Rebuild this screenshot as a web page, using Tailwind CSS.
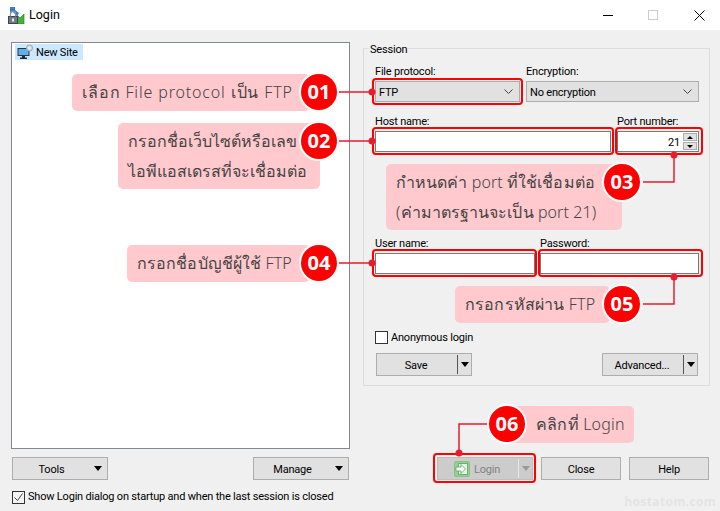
<!DOCTYPE html>
<html lang="th">
<head>
  <meta charset="UTF-8" />
  <meta name="viewport" content="width=device-width, initial-scale=1.0" />
  <title>Login</title>
  <script src="https://cdn.jsdelivr.net/npm/@tailwindcss/browser@4"></script>
</head>
<body class="bg-[#f0f0f0]">
  <div class="relative w-[720px] h-[511px] overflow-hidden bg-[#f0f0f0] font-['Roboto','Liberation_Sans',sans-serif] text-[11px] tracking-[-0.2px] leading-[16px] text-black">

    <!-- title bar -->
    <div class="flex items-center h-[30px] bg-white">
      <svg class="shrink-0 ml-[8px] w-[17px] h-[17px]" viewBox="0 0 17 17">
        <path d="M9 8l3 3 4-4v10H9z" fill="#45b23c" stroke="#1f7a20" stroke-width=".6"/>
        <path d="M2 0h5v3l4 3-2 3-4-4H2z" fill="#2d7fd6"/>
        <rect x=".5" y="9.500" width="9" height="7" fill="#6f7a86" stroke="#3f454d"/>
        <path d="M2.500 9.500V7a2.500 2.500 0 0 1 5 0v2.500" fill="none" stroke="#8a929c" stroke-width="1.300"/>
        <rect x="4" y="11.500" width="2" height="3" fill="#e8e8e8"/>
      </svg>
      <span class="ml-[4px] text-[12.5px] tracking-normal">Login</span>
      <div class="ml-auto flex items-center">
        <div class="w-[10px] h-px bg-black mr-[35px]"></div>
        <div class="w-[10px] h-[10px] border border-[#cccccc] mr-[36px]"></div>
        <svg class="w-[11px] h-[11px] mr-[15px]" viewBox="0 0 11 11"><path d="M.5.5l10 10M10.500.5l-10 10" stroke="#000" fill="none"/></svg>
      </div>
    </div>

    <div class="flex pt-[12px] pl-[11px]">
      <!-- left column -->
      <div class="w-[339px]">
        <div class="h-[407px] bg-white border border-[#828790] pl-[3px] pt-[1px]">
          <div class="flex items-center w-[68px] h-[16px] bg-[#cce8ff] whitespace-nowrap">
            <svg class="shrink-0 ml-[2px] w-[17px] h-[16px]" viewBox="0 0 17 16">
              <rect x="1" y="4.500" width="11" height="7" fill="#5eb0ea" stroke="#2a3644"/>
              <path d="M5 12h3v1.500h2V15H3v-1.500h2z" fill="#1f2a36"/>
              <circle cx="12.500" cy="4" r="3" fill="#d5dce2" stroke="#9aa6b0"/>
              <circle cx="12.500" cy="4" r="1" fill="#f4f7f9"/>
            </svg>
            <span class="ml-[2px] pt-[2px]">New Site</span>
          </div>
        </div>
        <div class="flex justify-between mt-[8px] pl-[1px] pr-[1px]">
          <div class="relative flex items-center justify-center w-[96px] h-[23px] bg-[#e1e1e1] border border-[#adadad]">
            <span class="mr-[17px] pt-[2px]">Tools</span>
            <span class="absolute right-[5px] top-[8px] w-0 h-0 border-x-[4px] border-x-transparent border-t-[5px] border-t-black"></span>
          </div>
          <div class="relative flex items-center justify-center w-[96px] h-[23px] bg-[#e1e1e1] border border-[#adadad]">
            <span class="mr-[17px] pt-[2px]">Manage</span>
            <span class="absolute right-[5px] top-[8px] w-0 h-0 border-x-[4px] border-x-transparent border-t-[5px] border-t-black"></span>
          </div>
        </div>
        <div class="flex items-center mt-[9px] pl-[1px]">
          <svg class="shrink-0 w-[13px] h-[13px]" viewBox="0 0 13 13"><rect x=".5" y=".5" width="12" height="12" fill="#f4f4f4" stroke="#333"/><path d="M2.500 6.500l3 3L10.500 2.500" fill="none" stroke="#444"/></svg>
          <span class="ml-[3px] whitespace-nowrap">Show Login dialog on startup and when the last session is closed</span>
        </div>
      </div>

      <!-- right column -->
      <div class="ml-[13px] w-[347px] pt-[6px]">
        <div class="relative h-[338px] border border-[#dcdcdc] pl-[11px] pr-[10px] pt-[14px]">
          <span class="absolute left-[5px] -top-[7px] px-px bg-[#f0f0f0]">Session</span>

          <div class="flex gap-[6px]">
            <div class="w-[145px]">
              <div class="h-[16px] mb-[2px] pt-px">File protocol:</div>
              <div class="flex items-center justify-between h-[21px] bg-[#e1e1e1] border border-[#adadad] pl-[3px] pr-[6px]">
                <span class="pt-[2px]">FTP</span>
                <svg class="w-[9px] h-[5px]" viewBox="0 0 9 5"><path d="M.5.5l4 4 4-4" fill="none" stroke="#444"/></svg>
              </div>
            </div>
            <div class="w-[173px]">
              <div class="h-[16px] mb-[2px] pt-px">Encryption:</div>
              <div class="flex items-center justify-between h-[21px] bg-[#e1e1e1] border border-[#adadad] pl-[3px] pr-[6px]">
                <span class="pt-[2px]">No encryption</span>
                <svg class="w-[9px] h-[5px]" viewBox="0 0 9 5"><path d="M.5.5l4 4 4-4" fill="none" stroke="#444"/></svg>
              </div>
            </div>
          </div>

          <div class="flex gap-[6px] mt-[11px]">
            <div class="w-[236px]">
              <div class="h-[16px] mb-[2px] pt-px">Host name:</div>
              <div class="h-[21px] bg-white border border-[#7a7a7a]"></div>
            </div>
            <div class="w-[82px]">
              <div class="h-[16px] mb-[2px] pt-px">Port number:</div>
              <div class="flex items-center justify-end h-[21px] bg-white border border-[#7a7a7a] pr-px">
                <span class="mr-[3px] pt-[2px]">21</span>
                <div class="flex flex-col gap-px w-[14px]">
                  <div class="flex items-center justify-center h-[8px] bg-[#e1e1e1] border border-[#adadad]"><span class="w-0 h-0 border-x-[3px] border-x-transparent border-b-[3px] border-b-black"></span></div>
                  <div class="flex items-center justify-center h-[8px] bg-[#e1e1e1] border border-[#adadad]"><span class="w-0 h-0 border-x-[3px] border-x-transparent border-t-[3px] border-t-black"></span></div>
                </div>
              </div>
            </div>
          </div>

          <div class="flex gap-[5px] mt-[83px]">
            <div class="w-[160px]">
              <div class="h-[16px] mb-[2px] pt-px">User name:</div>
              <div class="h-[21px] bg-white border border-[#7a7a7a]"></div>
            </div>
            <div class="w-[159px]">
              <div class="h-[16px] mb-[2px] pt-px">Password:</div>
              <div class="h-[21px] bg-white border border-[#7a7a7a]"></div>
            </div>
          </div>

          <div class="flex items-center mt-[57px] h-[13px]">
            <div class="w-[13px] h-[13px] bg-white border border-[#333333]"></div>
            <span class="ml-[3px]">Anonymous login</span>
          </div>

          <div class="flex justify-between mt-[9px] pl-px pr-px">
            <div class="relative flex items-center justify-center w-[96px] h-[23px] bg-[#e1e1e1] border border-[#adadad]">
              <span class="mr-[16px] pt-[2px]">Save</span>
              <span class="absolute right-[13px] top-[1px] w-px h-[19px] bg-[#555555]"></span>
              <span class="absolute right-[2px] top-[8px] w-0 h-0 border-x-[4px] border-x-transparent border-t-[5px] border-t-black"></span>
            </div>
            <div class="relative flex items-center justify-center w-[96px] h-[23px] bg-[#e1e1e1] border border-[#adadad]">
              <span class="mr-[16px] pt-[2px]">Advanced...</span>
              <span class="absolute right-[13px] top-[1px] w-px h-[19px] bg-[#555555]"></span>
              <span class="absolute right-[2px] top-[8px] w-0 h-0 border-x-[4px] border-x-transparent border-t-[5px] border-t-black"></span>
            </div>
          </div>
        </div>

        <div class="flex gap-[8px] mt-[71px] pl-[74px]">
          <div class="relative flex items-center w-[96px] h-[23px] bg-[#cccccc] border border-[#bfbfbf] text-[#838383]">
            <svg class="shrink-0 ml-[16px] w-[16px] h-[16px]" viewBox="0 0 16 16">
              <rect x=".5" y=".5" width="15" height="15" rx="1.500" fill="#93d093" stroke="#86c186"/>
              <rect x="4.500" y="2.500" width="9" height="11" fill="#e9f5e9" stroke="#6fae6f"/>
              <path d="M2 6h5V3.500L11.500 8 7 12.500V10H2z" fill="#f7fbf7" stroke="#5fa35f" stroke-width=".8"/>
            </svg>
            <span class="ml-[4px] pt-[2px]">Login</span>
            <span class="absolute right-[13px] top-[1px] w-px h-[19px] bg-[#e8e8e8]"></span>
            <span class="absolute right-[2px] top-[8px] w-0 h-0 border-x-[4px] border-x-transparent border-t-[5px] border-t-[#999999]"></span>
          </div>
          <div class="flex items-center justify-center w-[80px] h-[23px] bg-[#e1e1e1] border border-[#adadad]"><span class="pt-[2px]">Close</span></div>
          <div class="flex items-center justify-center w-[80px] h-[23px] bg-[#e1e1e1] border border-[#adadad]"><span class="pt-[2px]">Help</span></div>
        </div>
      </div>
    </div>

    <!-- annotations over the dialog -->
    <div class="absolute left-[372px] top-[78px] w-[151px] h-[27px] border-2 border-[#ff0000] rounded-[4px]"></div>
    <div class="absolute left-[372px] top-[127px] w-[242px] h-[28px] border-2 border-[#ff0000] rounded-[4px]"></div>
    <div class="absolute left-[615px] top-[127px] w-[88px] h-[28px] border-2 border-[#ff0000] rounded-[4px]"></div>
    <div class="absolute left-[372px] top-[249px] w-[165px] h-[28px] border-2 border-[#ff0000] rounded-[4px]"></div>
    <div class="absolute left-[538px] top-[249px] w-[165px] h-[28px] border-2 border-[#ff0000] rounded-[4px]"></div>
    <div class="absolute left-[433px] top-[453px] w-[103px] h-[30px] border-2 border-[#ff0000] rounded-[4px]"></div>

    <svg class="absolute left-0 top-0" width="720" height="511" viewBox="0 0 720 511">
      <g fill="none" stroke="#e81c2e" stroke-width="1.500">
        <path d="M339 92h33M339 141h33M339 263h33"/>
        <path d="M643 182h31v-27M643 304h31v-27"/>
        <path d="M487 424h-28v29"/>
      </g>
      <g fill="#e81c2e">
        <circle cx="372" cy="92" r="3.500"/>
        <circle cx="372" cy="141" r="3.500"/>
        <circle cx="372" cy="263" r="3.500"/>
        <circle cx="674" cy="155" r="3.500"/>
        <circle cx="674" cy="277" r="3.500"/>
        <circle cx="459" cy="453" r="3.500"/>
      </g>
    </svg>

    <div class="absolute left-[72px] top-[74px] flex items-center w-[238px] h-[37px] pb-[2px] pl-[10px] rounded-[5px] bg-[#ffc9ce] font-['Noto_Sans',sans-serif] font-light text-[16px] tracking-[0.85px] text-[#444444] whitespace-nowrap">เลือก File protocol เป็น FTP</div>
    <div class="absolute left-[118px] top-[123px] w-[202px] h-[66px] pl-[10px] pt-[3px] rounded-[5px] bg-[#ffc9ce] font-['Noto_Sans',sans-serif] font-light text-[16px] tracking-normal leading-[30px] text-[#444444] whitespace-nowrap">กรอกชื่อเว็บไซต์หรือเลข<br>ไอพีแอสเดรสที่จะเชื่อมต่อ</div>
    <div class="absolute left-[386px] top-[164px] w-[236px] h-[66px] pl-[10px] pt-[3px] rounded-[5px] bg-[#ffc9ce] font-['Noto_Sans',sans-serif] font-light text-[16px] tracking-[0.08px] leading-[30px] text-[#444444] whitespace-nowrap">กำหนดค่า port ที่ใช้เชื่อมต่อ<br>(ค่ามาตรฐานจะเป็น port 21)</div>
    <div class="absolute left-[127px] top-[245px] flex items-center w-[183px] h-[37px] pb-[2px] pl-[10px] rounded-[5px] bg-[#ffc9ce] font-['Noto_Sans',sans-serif] font-light text-[16px] tracking-[0.1px] text-[#444444] whitespace-nowrap">กรอกชื่อบัญชีผู้ใช้ FTP</div>
    <div class="absolute left-[455px] top-[286px] flex items-center w-[155px] h-[37px] pb-[2px] pl-[10px] rounded-[5px] bg-[#ffc9ce] font-['Noto_Sans',sans-serif] font-light text-[16px] tracking-[0.15px] text-[#444444] whitespace-nowrap">กรอกรหัสผ่าน FTP</div>
    <div class="absolute left-[510px] top-[406px] flex items-center w-[124px] h-[37px] pb-[2px] pl-[26px] rounded-[5px] bg-[#ffc9ce] font-['Noto_Sans',sans-serif] font-light text-[16px] tracking-[0.2px] text-[#444444] whitespace-nowrap">คลิกที่ Login</div>

    <div class="absolute left-[299px] top-[72px] flex items-center justify-center w-[40px] h-[40px] rounded-full border-2 border-white bg-[#ff0000] text-white text-[20px] tracking-normal font-bold font-['Open_Sans',sans-serif]">01</div>
    <div class="absolute left-[299px] top-[121px] flex items-center justify-center w-[40px] h-[40px] rounded-full border-2 border-white bg-[#ff0000] text-white text-[20px] tracking-normal font-bold font-['Open_Sans',sans-serif]">02</div>
    <div class="absolute left-[602px] top-[162px] flex items-center justify-center w-[40px] h-[40px] rounded-full border-2 border-white bg-[#ff0000] text-white text-[20px] tracking-normal font-bold font-['Open_Sans',sans-serif]">03</div>
    <div class="absolute left-[299px] top-[243px] flex items-center justify-center w-[40px] h-[40px] rounded-full border-2 border-white bg-[#ff0000] text-white text-[20px] tracking-normal font-bold font-['Open_Sans',sans-serif]">04</div>
    <div class="absolute left-[602px] top-[284px] flex items-center justify-center w-[40px] h-[40px] rounded-full border-2 border-white bg-[#ff0000] text-white text-[20px] tracking-normal font-bold font-['Open_Sans',sans-serif]">05</div>
    <div class="absolute left-[487px] top-[404px] flex items-center justify-center w-[40px] h-[40px] rounded-full border-2 border-white bg-[#ff0000] text-white text-[20px] tracking-normal font-bold font-['Open_Sans',sans-serif]">06</div>

    <div class="absolute right-[4px] bottom-[1px] font-['Open_Sans',sans-serif] text-[12px] leading-[16px] font-bold tracking-[0.4px] text-[#e4e4e4]">hostatom.com</div>
  </div>
</body>
</html>
